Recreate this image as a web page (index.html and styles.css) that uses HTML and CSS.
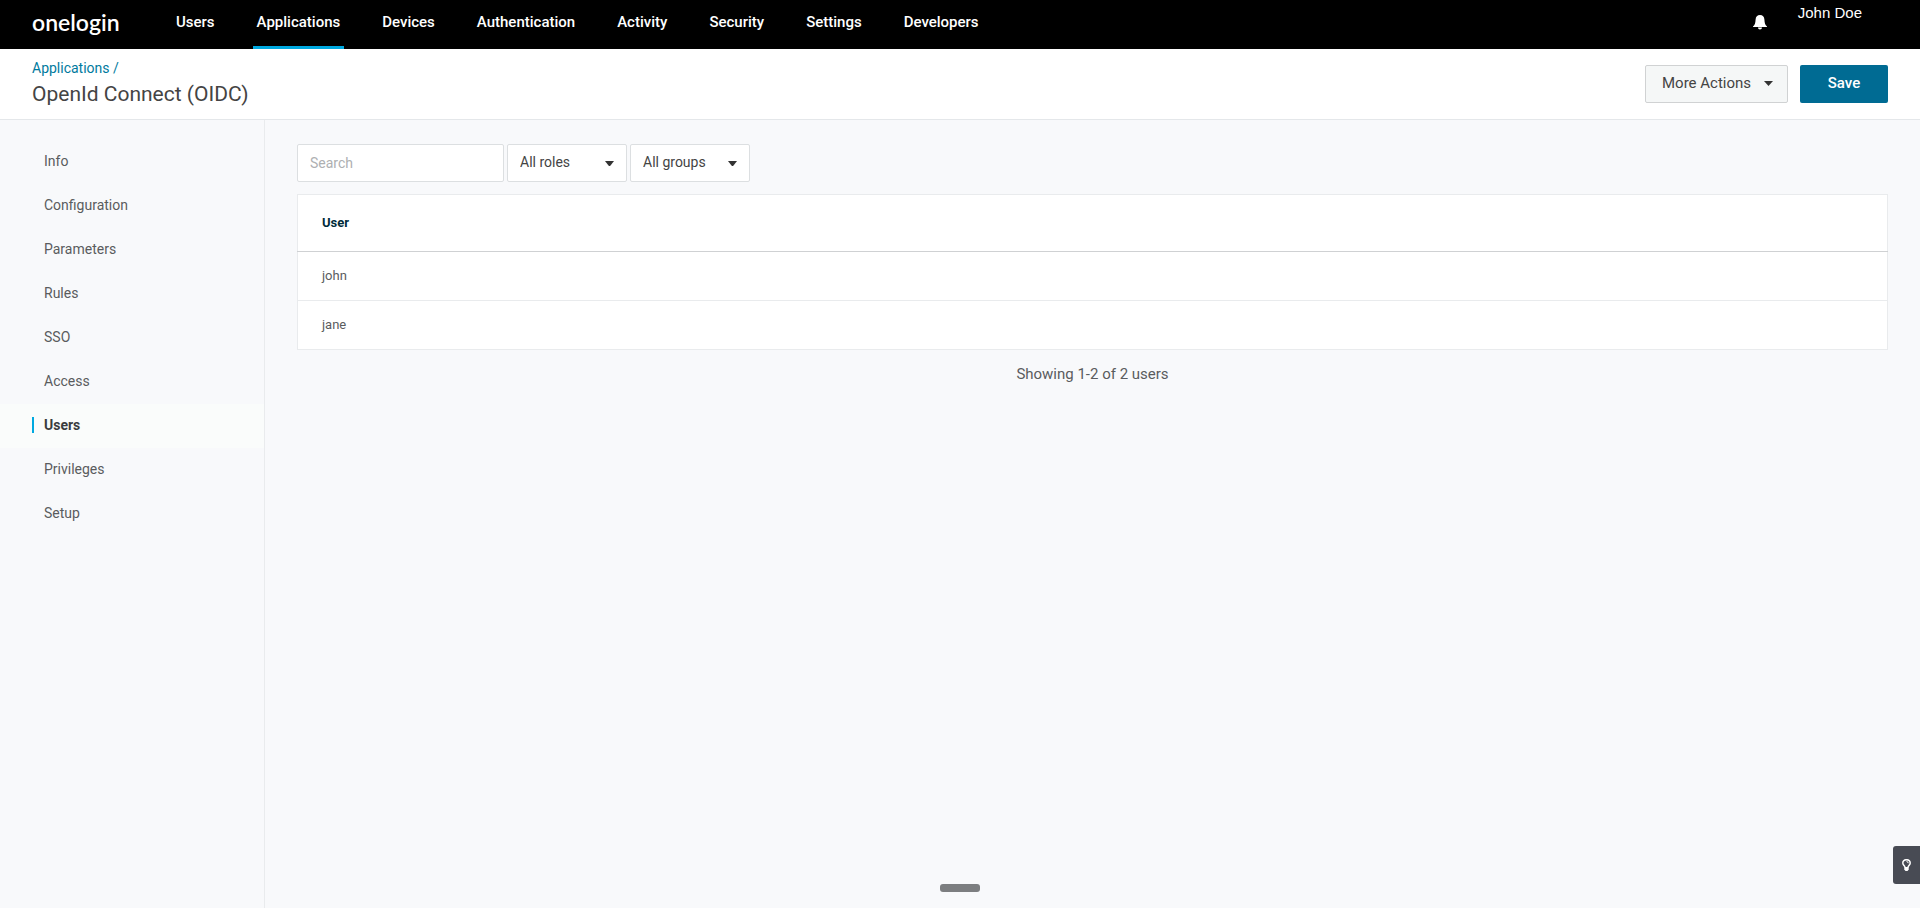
FILE: index.html
```html
<!DOCTYPE html>
<html lang="en">
<head>
    <meta charset="UTF-8">
    <meta name="viewport" content="width=device-width, initial-scale=1.0">
    <title>OpenId Connect (OIDC)</title>
    <link rel="stylesheet" href="styles.css">
</head>
<body>
    <header class="topbar">
        <a class="logo" href="#">onelogin</a>
        <nav class="main-nav">
            <a href="#">Users</a>
            <a class="active" href="#">Applications</a>
            <a href="#">Devices</a>
            <a href="#">Authentication</a>
            <a href="#">Activity</a>
            <a href="#">Security</a>
            <a href="#">Settings</a>
            <a href="#">Developers</a>
        </nav>
        <button class="bell" type="button" aria-label="Notifications">
            <svg width="14" height="15" viewBox="0 0 14 15">
                <path fill="#fff" d="M7 0C4.300 0 2.800 1.800 2.600 4.400C2.400 8 2 9.500 0 11.500V12H14V11.500C12 9.500 11.600 8 11.400 4.400C11.200 1.800 9.700 0 7 0ZM5 12.500C5 13.700 5.800 14.500 7 14.500S9 13.700 9 12.500Z"/>
            </svg>
        </button>
        <a class="user-name" href="#">John Doe</a>
    </header>

    <div class="title-bar">
        <div class="heading">
            <a class="breadcrumb" href="#">Applications /</a>
            <h1>OpenId Connect (OIDC)</h1>
        </div>
        <button class="btn btn-more" type="button">
            More Actions
            <svg class="caret" width="9" height="5" viewBox="0 0 9 5"><path d="M0 0H9L4.500 5Z"/></svg>
        </button>
        <button class="btn btn-save" type="button">Save</button>
    </div>

    <div class="layout">
        <nav class="sidebar">
            <a href="#">Info</a>
            <a href="#">Configuration</a>
            <a href="#">Parameters</a>
            <a href="#">Rules</a>
            <a href="#">SSO</a>
            <a href="#">Access</a>
            <a class="active" href="#">Users</a>
            <a href="#">Privileges</a>
            <a href="#">Setup</a>
        </nav>

        <main class="content">
            <form class="filters">
                <input class="search" type="text" placeholder="Search" aria-label="Search">
                <div class="select-box">
                    <select aria-label="Roles">
                        <option>All roles</option>
                    </select>
                    <svg class="caret" width="9" height="5" viewBox="0 0 9 5"><path d="M0 0H9L5.500 4.500Q4.500 5.500 3.500 4.500Z"/></svg>
                </div>
                <div class="select-box">
                    <select aria-label="Groups">
                        <option>All groups</option>
                    </select>
                    <svg class="caret" width="9" height="5" viewBox="0 0 9 5"><path d="M0 0H9L5.500 4.500Q4.500 5.500 3.500 4.500Z"/></svg>
                </div>
            </form>

            <table class="users">
                <thead>
                    <tr><th>User</th></tr>
                </thead>
                <tbody>
                    <tr><td>john</td></tr>
                    <tr><td>jane</td></tr>
                </tbody>
            </table>
            <p class="summary">Showing 1-2 of 2 users</p>
        </main>
    </div>

    <div class="drag-handle"></div>
    <button class="hint" type="button" aria-label="Tips">
        <svg width="9" height="12" viewBox="0 0 9 12">
            <path fill="none" stroke="#fff" stroke-width="1.500" d="M3 8.500C3 6.800 .8 6.200 .8 4A3.700 3.300 0 0 1 8.200 4C8.200 6.200 6 6.800 6 8.500"/>
            <path fill="none" stroke="#fff" d="M4.500 2.500Q6.200 2.500 6.200 4.200"/>
            <path fill="#fff" d="M2.300 8H6.700V10.500L5.500 12H3.500L2.300 10.500Z"/>
        </svg>
    </button>
</body>
</html>
```
FILE: styles.css
```css
:root {
    --accent: #00a9e0;
    --link: #007a9e;
    --primary: #006b93;
    --page-bg: #f8f9fb;
    --line: #e9ebed;
    --gutter: 32px;
}

* {
    box-sizing: border-box;
}

body {
    margin: 0;
    min-height: 100vh;
    display: flex;
    flex-direction: column;
    background: var(--page-bg);
    color: #444;
    font-family: Roboto, "Liberation Sans", sans-serif;
    font-size: 14px;
    line-height: 20px;
}

a {
    color: inherit;
    text-decoration: none;
}

button,
input,
select {
    font: inherit;
    color: inherit;
}

/* Top bar */
.topbar {
    display: flex;
    align-items: flex-start;
    height: 49px;
    padding: 0 58px 0 var(--gutter);
    background: #000;
    color: #fff;
}

.logo {
    width: 140px;
    font-family: Lato, sans-serif;
    font-size: 23px;
    font-weight: 600;
    line-height: 44px;
}

.main-nav {
    display: flex;
    gap: 34px;
    flex: 1;
}

.main-nav a {
    height: 49px;
    padding: 12px 4px 0;
    font-size: 15px;
    font-weight: 500;
}

.main-nav .active {
    border-bottom: 3px solid var(--accent);
}

.bell {
    display: flex;
    padding: 0;
    margin: 15px 31px 0 0;
    border: 0;
    background: none;
}

.user-name {
    font-family: "Liberation Sans", Arial, sans-serif;
    font-size: 15px;
    line-height: 26px;
}

/* Title bar */
.title-bar {
    display: flex;
    align-items: center;
    gap: 12px;
    height: 71px;
    padding: 0 var(--gutter);
    border-bottom: 1px solid #e4e7ea;
    background: #fff;
}

.heading {
    flex: 1;
}

.breadcrumb {
    color: var(--link);
}

h1 {
    margin: 0;
    font-size: 21px;
    font-weight: 400;
    line-height: 32px;
}

.btn {
    height: 38px;
    padding-bottom: 3px;
    border: 1px solid transparent;
    border-radius: 2px;
    font-size: 15px;
}

.btn-more {
    display: flex;
    align-items: center;
    justify-content: space-between;
    width: 143px;
    padding-right: 14px;
    padding-left: 16px;
    border-color: #d0d2d3;
    background: #f5f7f7;
}

.btn-save {
    width: 88px;
    background: var(--primary);
    color: #fff;
    font-weight: 500;
}

.caret {
    fill: #333;
}

/* Page body */
.layout {
    display: flex;
    flex: 1;
}

.sidebar {
    width: 265px;
    padding-top: 20px;
    border-right: 1px solid var(--line);
    color: #5a5c5e;
}

.sidebar a {
    display: flex;
    align-items: center;
    height: 44px;
    padding-bottom: 2px;
    padding-left: 44px;
}

.sidebar .active {
    padding-left: var(--gutter);
    background: #fafcfb;
    color: #3a3c3e;
    font-weight: 700;
}

.sidebar .active::before {
    content: "";
    width: 2px;
    height: 16px;
    margin-right: 10px;
    background: var(--accent);
}

.content {
    flex: 1;
    padding: 24px var(--gutter);
}

.filters {
    display: flex;
    gap: 3px;
    margin-bottom: 12px;
}

.search,
.select-box select {
    height: 38px;
    padding: 0 12px;
    border: 1px solid #dcdfe1;
    border-radius: 2px;
    background: #fff;
}

.search {
    width: 207px;
}

.search::placeholder {
    color: #aeb0b2;
}

.select-box {
    position: relative;
}

.select-box select {
    width: 120px;
    padding-bottom: 2px;
    appearance: none;
}

.select-box .caret {
    position: absolute;
    top: 17px;
    right: 13px;
    pointer-events: none;
}

.users {
    width: 100%;
    border: 1px solid var(--line);
    border-collapse: collapse;
    background: #fff;
    font-size: 13px;
    text-align: left;
}

.users th,
.users td {
    height: 49px;
    padding: 0 24px;
    border-bottom: 1px solid var(--line);
    color: #5a5c5e;
}

.users th {
    height: 57px;
    border-bottom-color: #cfd1d3;
    color: #002b3a;
    font-weight: 700;
}

.summary {
    margin: 14px 0;
    color: #5a5c5e;
    font-size: 15px;
    text-align: center;
}

/* Floating bits */
.drag-handle {
    position: fixed;
    bottom: 16px;
    left: 50%;
    width: 40px;
    height: 8px;
    margin-left: -20px;
    border-radius: 3px;
    background: #7c7e80;
}

.hint {
    position: fixed;
    right: 0;
    bottom: 24px;
    display: flex;
    align-items: center;
    width: 27px;
    height: 38px;
    padding: 0 0 0 9px;
    border: 0;
    border-radius: 3px 0 0 3px;
    background: #484b54;
}
```
